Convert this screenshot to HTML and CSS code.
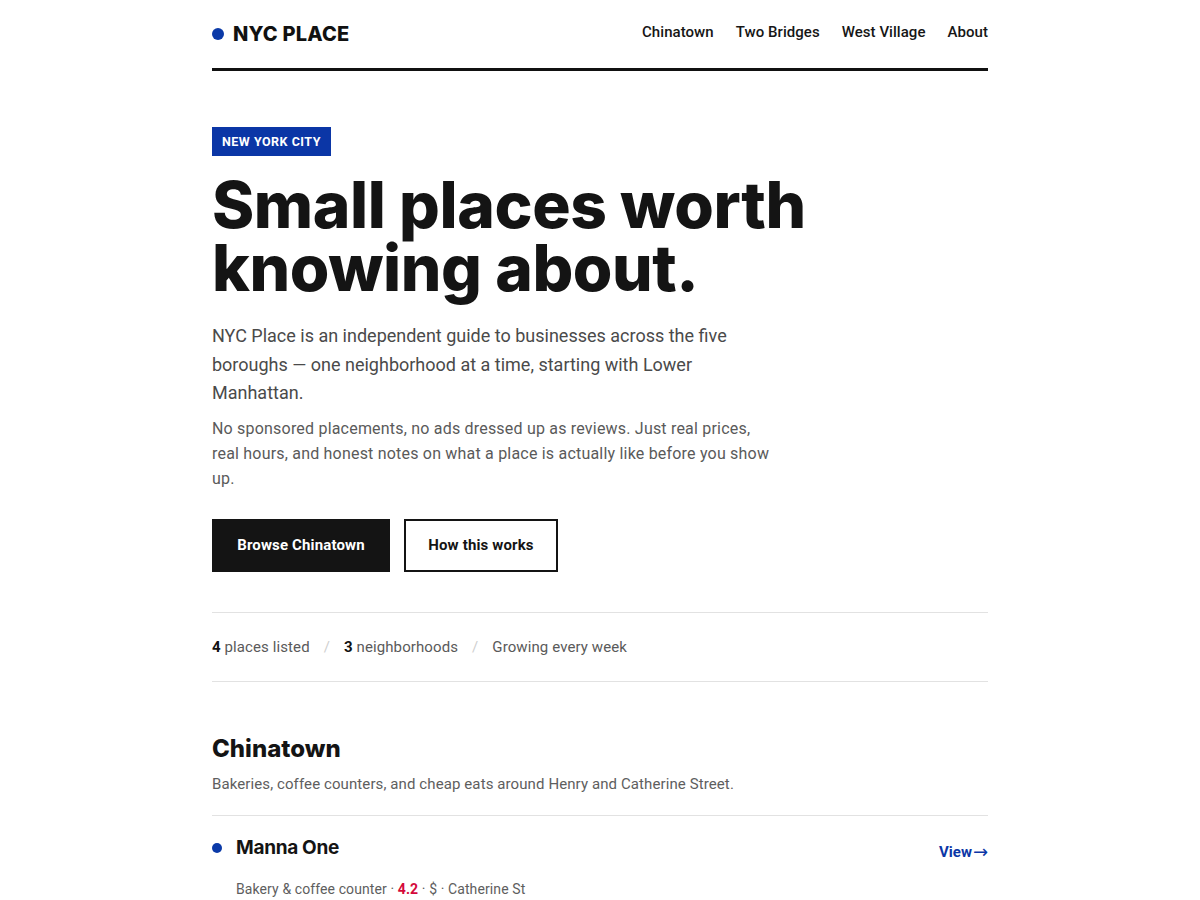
FILE: index.html
```html
<!DOCTYPE html>
<html lang="en">
<head>
<meta charset="utf-8">
<title>NYC Place</title>
<link rel="stylesheet" href="styles.css">
</head>
<body>
<div class="page">
  <header class="site-header">
    <a class="logo" href="#"><span class="logo-dot"></span>NYC PLACE</a>
    <nav class="nav">
      <a href="#">Chinatown</a>
      <a href="#">Two Bridges</a>
      <a href="#">West Village</a>
      <a href="#">About</a>
    </nav>
  </header>

  <section class="hero">
    <span class="tag">NEW YORK CITY</span>
    <h1 class="title">Small places worth knowing about.</h1>
    <p class="lead">NYC Place is an independent guide to businesses across the five boroughs — one neighborhood at a time, starting with Lower Manhattan.</p>
    <p class="sub">No sponsored placements, no ads dressed up as reviews. Just real prices, real hours, and honest notes on what a place is actually like before you show up.</p>
    <div class="actions">
      <a class="btn btn-dark" href="#">Browse Chinatown</a>
      <a class="btn btn-outline" href="#">How this works</a>
    </div>
  </section>

  <div class="stats">
    <span><b>4</b> places listed</span>
    <span class="sep">/</span>
    <span><b>3</b> neighborhoods</span>
    <span class="sep">/</span>
    <span>Growing every week</span>
  </div>

  <section class="hood">
    <h2 class="hood-title">Chinatown</h2>
    <p class="hood-desc">Bakeries, coffee counters, and cheap eats around Henry and Catherine Street.</p>
    <ul class="places">
      <li class="place">
        <span class="place-dot"></span>
        <div class="place-body">
          <div class="place-top">
            <h3 class="place-name">Manna One</h3>
            <a class="view" href="#">View<span class="arrow">→</span></a>
          </div>
          <p class="place-meta">Bakery &amp; coffee counter · <b class="rating">4.2</b> · $ · Catherine St</p>
        </div>
      </li>
    </ul>
  </section>
</div>
</body>
</html>
```

FILE: styles.css
```css
* { box-sizing: border-box; }
html, body { margin: 0; padding: 0; background: #fff; }
body {
  font-family: "Roboto", "Noto Sans", sans-serif;
  color: #111;
}
a { color: inherit; text-decoration: none; }

.page {
  width: 776px;
  margin: 0 auto;
}

.site-header {
  height: 71px;
  display: flex;
  align-items: center;
  justify-content: space-between;
  border-bottom: 3px solid #111;
  padding-bottom: 3px;
}
.logo {
  display: flex;
  align-items: center;
  gap: 9px;
  font-family: "Inter", sans-serif;
  font-weight: 800;
  font-size: 20px;
  letter-spacing: 0.2px;
  color: #111;
  margin-top: 3px;
}
.logo-dot {
  width: 12px;
  height: 12px;
  border-radius: 50%;
  background: #0b3aa8;
}
.nav {
  display: flex;
  gap: 22px;
  margin-top: -2px;
}
.nav a {
  font-size: 15px;
  font-weight: 500;
  letter-spacing: 0.05px;
  color: #161616;
}

.hero {
  padding-top: 56px;
}
.tag {
  display: inline-block;
  background: #0b36a6;
  color: #fff;
  font-size: 12.5px;
  font-weight: 700;
  line-height: 29px;
  padding: 0 10px;
  letter-spacing: 0.5px;
}
.title {
  margin: 17px 0 0;
  font-family: "Inter", sans-serif;
  font-weight: 800;
  font-size: 64px;
  line-height: 63px;
  letter-spacing: -0.4px;
  color: #141414;
  max-width: 640px;
}
.lead {
  margin: 23px 0 0;
  max-width: 560px;
  font-size: 18px;
  line-height: 28.5px;
  color: #4a4a4a;
}
.sub {
  margin: 8px 0 0;
  max-width: 560px;
  font-size: 16px;
  line-height: 25px;
  letter-spacing: 0.2px;
  color: #5a5a5a;
}
.actions {
  display: flex;
  gap: 14px;
  margin-top: 28px;
}
.btn {
  display: inline-flex;
  align-items: center;
  justify-content: center;
  height: 53px;
  font-size: 15px;
  font-weight: 700;
  letter-spacing: 0.15px;
}
.btn-dark {
  background: #141414;
  color: #fff;
  width: 178px;
}
.btn-outline {
  border: 2px solid #141414;
  color: #141414;
  width: 154px;
}

.stats {
  margin-top: 40px;
  border-top: 1px solid #e2e2e2;
  border-bottom: 1px solid #e2e2e2;
  height: 70px;
  display: flex;
  align-items: center;
  gap: 14px;
  font-size: 15px;
  letter-spacing: 0.1px;
  color: #5a5a5a;
}
.stats b { color: #111; font-weight: 700; }
.stats .sep { color: #cfcfcf; }

.hood {
  padding-top: 52px;
}
.hood-title {
  margin: 0;
  font-family: "Inter", sans-serif;
  font-weight: 800;
  font-size: 24px;
  line-height: 30px;
  letter-spacing: 0;
  color: #141414;
}
.hood-desc {
  margin: 9px 0 0;
  font-size: 15px;
  line-height: 22px;
  letter-spacing: 0.1px;
  color: #5e5e5e;
  padding-bottom: 20px;
  border-bottom: 1px solid #e2e2e2;
}
.places {
  list-style: none;
  margin: 0;
  padding: 0;
}
.place {
  display: flex;
  gap: 14px;
  padding-top: 20px;
}
.place-dot {
  flex: none;
  width: 10px;
  height: 10px;
  border-radius: 50%;
  background: #0b3aa8;
  margin-top: 7px;
}
.place-body { flex: 1; }
.place-top {
  display: flex;
  justify-content: space-between;
  align-items: flex-end;
}
.place-name {
  margin: 0;
  font-family: "Inter", sans-serif;
  font-weight: 700;
  font-size: 19px;
  line-height: 24px;
  letter-spacing: -0.3px;
  color: #141414;
}
.view {
  display: flex;
  align-items: center;
  font-size: 15px;
  font-weight: 700;
  color: #0b36a6;
  line-height: 20px;
  margin-bottom: -2px;
}
.view .arrow {
  margin-left: 1px;
  font-size: 18px;
  font-weight: 400;
  font-family: "DejaVu Sans", sans-serif;
}
.place-meta {
  margin: 19px 0 0;
  font-size: 14px;
  line-height: 20px;
  letter-spacing: 0.1px;
  color: #5e5e5e;
}
.rating { color: #d4093b; font-weight: 700; }
```
